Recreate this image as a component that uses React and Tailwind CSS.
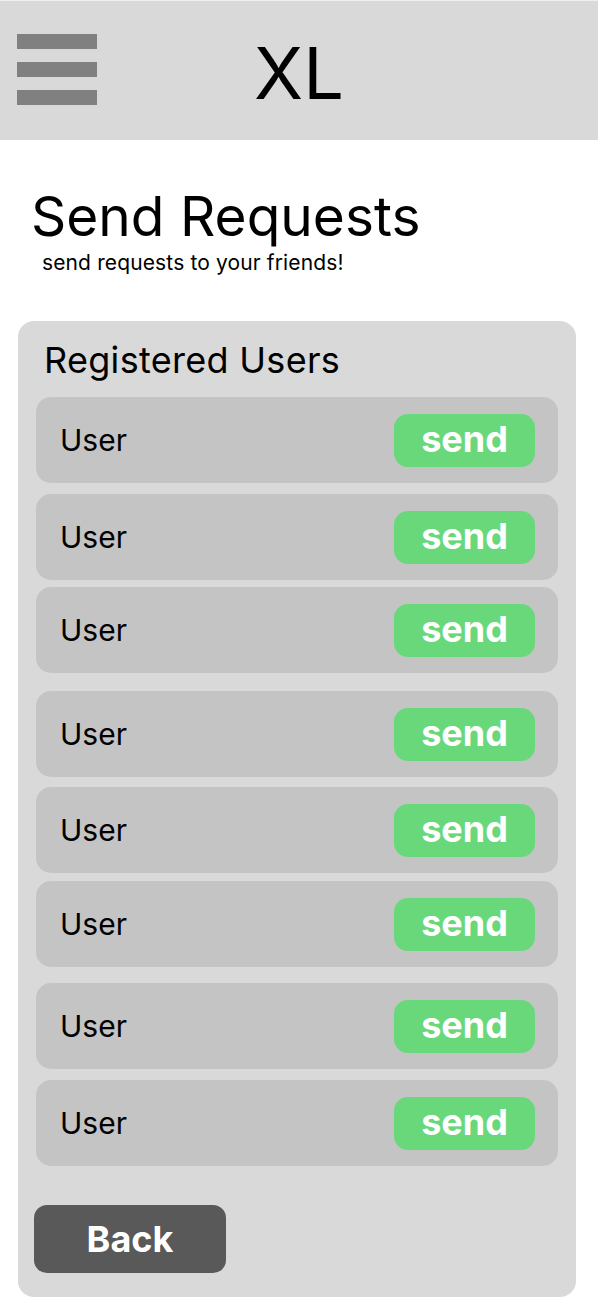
import React from "react";

const gaps = ["mt-0", "mt-[11px]", "mt-[7px]", "mt-[18px]", "mt-[10px]", "mt-[8px]", "mt-[16px]", "mt-[11px]"];

function Row({ gap }) {
  return (
    <div className={`${gap} h-[86px] rounded-[15px] bg-[#c4c4c4] flex items-center justify-between pl-[24px] pr-[23px]`}>
      <span className="text-[30px] leading-none text-black">User</span>
      <button className="w-[141px] h-[53px] rounded-[14px] bg-[#69d87b] text-white font-bold text-[36px] leading-none flex items-center justify-center pb-[2px]">
        send
      </button>
    </div>
  );
}

export default function App() {
  return (
    <div className="w-[598px] min-h-[1298px] bg-white font-['Inter',sans-serif] text-black">
      <header className="h-[140px] bg-[#d9d9d9] border-t border-[#eeeeee] relative flex items-center justify-center">
        <div className="absolute left-[17px] top-[33px] flex flex-col gap-[13px]">
          <div className="w-[80px] h-[15px] bg-[#808080]" />
          <div className="w-[80px] h-[15px] bg-[#808080]" />
          <div className="w-[80px] h-[15px] bg-[#808080]" />
        </div>
        <span className="text-[72px] leading-none mt-[5px]">XL</span>
      </header>
      <div className="pl-[31px] pt-[49px]">
        <h1 className="text-[55px] leading-[55px] font-normal">Send Requests</h1>
        <p className="text-[21px] leading-[21px] tracking-[0.13px] ml-[11px] mt-[8px]">send requests to your friends!</p>
      </div>
      <section className="ml-[18px] mt-[48px] w-[558px] rounded-[16px] bg-[#d9d9d9] px-[18px] pt-[21px] pb-[24px]">
        <h2 className="text-[36px] leading-[36px] tracking-[0.3px] pl-[8px]">Registered Users</h2>
        <div className="mt-[19px] flex flex-col">
          {gaps.map((g, i) => (
            <Row key={i} gap={g} />
          ))}
        </div>
        <button className="mt-[39px] ml-[-2px] w-[192px] h-[68px] rounded-[13px] bg-[#595959] text-white font-bold text-[36px] leading-none flex items-center justify-center">
          Back
        </button>
      </section>
    </div>
  );
}
